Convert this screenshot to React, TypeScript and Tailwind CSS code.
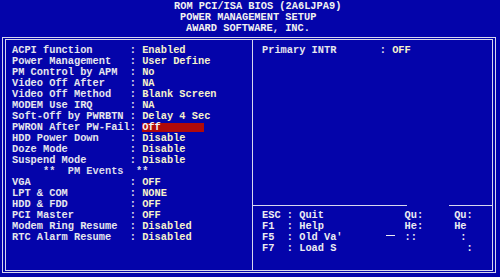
const LEFT_ROWS: { label: string; value?: string; selected?: boolean; heading?: boolean }[] = [
  { label: "ACPI function", value: "Enabled" },
  { label: "Power Management", value: "User Define" },
  { label: "PM Control by APM", value: "No" },
  { label: "Video Off After", value: "NA" },
  { label: "Video Off Method", value: "Blank Screen" },
  { label: "MODEM Use IRQ", value: "NA" },
  { label: "Soft-Off by PWRBTN", value: "Delay 4 Sec" },
  { label: "PWRON After PW-Fail", value: "Off", selected: true },
  { label: "HDD Power Down", value: "Disable" },
  { label: "Doze Mode", value: "Disable" },
  { label: "Suspend Mode", value: "Disable" },
  { label: "     **  PM Events  **", heading: true },
  { label: "VGA", value: "OFF" },
  { label: "LPT & COM", value: "NONE" },
  { label: "HDD & FDD", value: "OFF" },
  { label: "PCI Master", value: "OFF" },
  { label: "Modem Ring Resume", value: "Disabled" },
  { label: "RTC Alarm Resume", value: "Disabled" },
];

// labels are padded to 19 cells, then ": " and the value
function SettingRow({ label, value, selected, heading }: (typeof LEFT_ROWS)[number]) {
  if (heading) {
    return <div className="h-[11px] whitespace-pre text-[#dcdcec]">{label}</div>;
  }
  return (
    <div className="flex h-[11px] items-start whitespace-pre">
      <span className="text-[#e6e6ee]">{label.padEnd(19) + ": "}</span>
      {selected ? (
        <span className="mt-px h-[9px] w-[62px] bg-[#b00a0a] leading-[9px] text-[#f4f4f4]">{value}</span>
      ) : (
        <span className="text-[#f6f2cc]">{value}</span>
      )}
    </div>
  );
}

export default function App() {
  return (
    <div className="h-[277px] w-[500px] overflow-hidden bg-[#0404aa] font-['Liberation_Mono','DejaVu_Sans_Mono',monospace] text-[10.33px] font-bold leading-[11px]">
      <header className="flex h-[37px] flex-col pt-px text-[#f2f2f2] whitespace-pre">
        <div className="pl-[174px]">ROM PCI/ISA BIOS (2A6LJPA9)</div>
        <div className="pl-[180px]">POWER MANAGEMENT SETUP</div>
        <div className="pl-[186px]">AWARD SOFTWARE, INC.</div>
      </header>

      <div className="ml-[2px] h-[236px] w-[494px] border border-[#d8d8ee] px-[2px] py-px">
        <div className="flex h-full border border-[#d8d8ee]">
          <section className="w-[247px] border-r border-[#d8d8ee] pl-[6px] pt-[5px]">
            {LEFT_ROWS.map((row) => (
              <SettingRow key={row.label} {...row} />
            ))}
          </section>

          <section className="flex flex-1 flex-col">
            <div className="h-[165px] pl-[9px] pt-[5px] whitespace-pre">
              <span className="text-[#e6e6ee]">{"Primary INTR".padEnd(19) + ": "}</span>
              <span className="text-[#f6f2cc]">OFF</span>
            </div>
            <div className="flex h-px">
              <div className="w-[154px] bg-[#d8d8ee]" />
              <div className="ml-[42px] flex-1 bg-[#d8d8ee]" />
            </div>
            <div className="pl-[9px] pt-[4px] whitespace-pre text-[#ececf2]">
              <div className="h-[11px]">{"ESC : Quit".padEnd(23) + "Qu:".padEnd(8) + "Qu:"}</div>
              <div className="h-[11px]">{"F1  : Help".padEnd(23) + "He:".padEnd(8) + "He"}</div>
              <div className="flex h-[11px] items-start">
                <span>{"F5  : Old Va'".padEnd(20)}</span>
                <span className="w-[12.4px]">
                  <span className="mt-[3px] block h-px w-[9px] bg-[#ececf2]" />
                </span>
                <span>{" ::".padEnd(10) + ":"}</span>
              </div>
              <div className="h-[11px]">{"F7  : Load S".padEnd(33) + ":"}</div>
            </div>
          </section>
        </div>
      </div>
    </div>
  );
}
